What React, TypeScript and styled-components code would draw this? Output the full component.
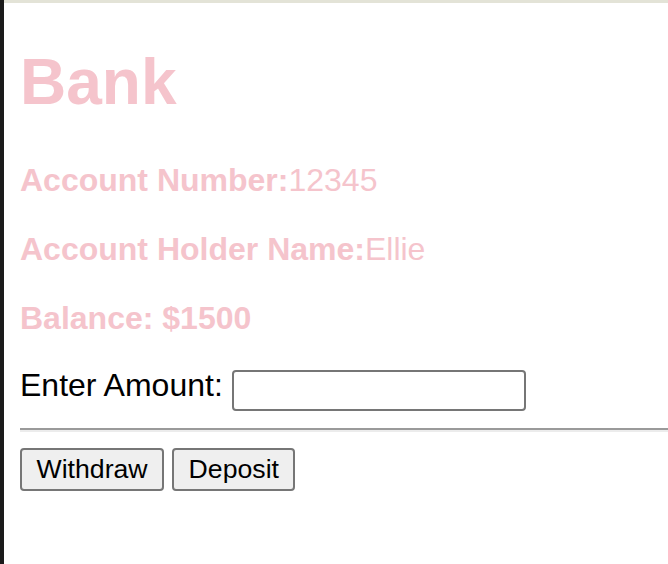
import styled, { createGlobalStyle } from 'styled-components';

const GlobalStyle = createGlobalStyle`
    html, body {
        margin: 0;
        padding: 0;
        background: #ffffff;
        font-family: "Liberation Sans", Arial, sans-serif;
    }
`;

const pink = '#f5c4cc';

const account = {
    number: '12345',
    holder: 'Ellie',
    balance: 1500,
};

const App = () => {
    return (
        <>
            <GlobalStyle />
            <Frame>
                <EdgeStrip />
                <Main>
                    <TopBar />
                    <Content>
                        <Title>Bank</Title>
                        <InfoLine>
                            <strong>Account Number:</strong>{account.number}
                        </InfoLine>
                        <InfoLine>
                            <strong>Account Holder Name:</strong>{account.holder}
                        </InfoLine>
                        <InfoLine>
                            <strong>Balance: ${account.balance}</strong>
                        </InfoLine>
                        <AmountRow>
                            <AmountLabel htmlFor="amount">Enter Amount:</AmountLabel>
                            <AmountInput id="amount" type="text" />
                        </AmountRow>
                        <Divider />
                        <ButtonRow>
                            <ActionButton>Withdraw</ActionButton>
                            <ActionButton>Deposit</ActionButton>
                        </ButtonRow>
                    </Content>
                </Main>
            </Frame>
        </>
    );
};

const Frame = styled.div`
    display: flex;
    min-height: 100vh;
`;

const EdgeStrip = styled.div`
    width: 4px;
    flex-shrink: 0;
    background: #1b1b1b;
`;

const Main = styled.div`
    flex: 1;
    display: flex;
    flex-direction: column;
`;

const TopBar = styled.div`
    height: 3px;
    background: #e3e3d7;
`;

const Content = styled.div`
    padding-left: 16px;
`;

const Title = styled.h1`
    margin: 42px 0 43px;
    font-size: 64px;
    line-height: 74px;
    font-weight: bold;
    color: ${pink};
`;

const InfoLine = styled.p`
    margin: 0 0 32px;
    font-size: 32px;
    line-height: 37px;
    color: ${pink};
    white-space: nowrap;
`;

const AmountRow = styled.div`
    display: flex;
    align-items: flex-start;
    margin-top: -2px;
`;

const AmountLabel = styled.label`
    font-size: 32px;
    line-height: 37px;
    color: #000000;
`;

const AmountInput = styled.input`
    box-sizing: border-box;
    margin: 3px 0 0 9px;
    width: 294px;
    height: 41px;
    padding: 2px 4px;
    border: 2px solid #767676;
    border-radius: 4px;
    background: #ffffff;
    font-size: 26px;
    font-family: "Liberation Sans", Arial, sans-serif;
`;

const Divider = styled.hr`
    margin: 17px 0 16px;
    height: 0;
    border: none;
    border-top: 2px solid #9a9a9a;
    border-bottom: 2px solid #ececec;
`;

const ButtonRow = styled.div`
    display: flex;
    gap: 8px;
`;

const ActionButton = styled.button`
    box-sizing: border-box;
    height: 43px;
    padding: 0 14.5px;
    border: 2px solid #767676;
    border-radius: 4px;
    background: #efefef;
    color: #000000;
    font-size: 26.67px;
    font-family: "Liberation Sans", Arial, sans-serif;
`;

export default App;
